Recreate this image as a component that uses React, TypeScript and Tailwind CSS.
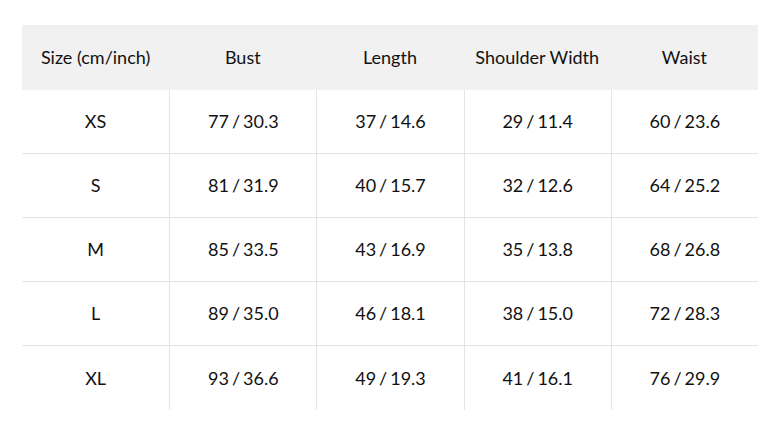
import React from 'react';

const headers = ['Size (cm/inch)', 'Bust', 'Length', 'Shoulder Width', 'Waist'];

const rows = [
    ['XS', '77 / 30.3', '37 / 14.6', '29 / 11.4', '60 / 23.6'],
    ['S', '81 / 31.9', '40 / 15.7', '32 / 12.6', '64 / 25.2'],
    ['M', '85 / 33.5', '43 / 16.9', '35 / 13.8', '68 / 26.8'],
    ['L', '89 / 35.0', '46 / 18.1', '38 / 15.0', '72 / 28.3'],
    ['XL', '93 / 36.6', '49 / 19.3', '41 / 16.1', '76 / 29.9'],
];

export default function App() {
    return (
        <div className="w-[783px] h-[431px] bg-white pt-[25px] pl-[22px] font-['Lato',sans-serif] text-[18px] text-[#111]">
            <div className="w-[736px]">
                <div className="grid grid-cols-5 h-[65px] bg-[#f1f1f1]">
                    {headers.map((h) => (
                        <div key={h} className="flex items-center justify-center">{h}</div>
                    ))}
                </div>
                {rows.map((r, i) => (
                    <div
                        key={r[0]}
                        className={`grid grid-cols-5 h-16 ${i < rows.length - 1 ? 'border-b border-[#e4e4e4]' : ''}`}
                    >
                        {r.map((c, j) => (
                            <div
                                key={j}
                                className={`flex items-center justify-center ${j > 0 ? 'border-l border-[#e4e4e4]' : ''}`}
                            >
                                {c.split(' / ').length > 1 ? (
                                    <span>
                                        {c.split(' / ')[0]}
                                        <span className="mx-[3px]">/</span>
                                        {c.split(' / ')[1]}
                                    </span>
                                ) : (
                                    c
                                )}
                            </div>
                        ))}
                    </div>
                ))}
            </div>
        </div>
    );
}
